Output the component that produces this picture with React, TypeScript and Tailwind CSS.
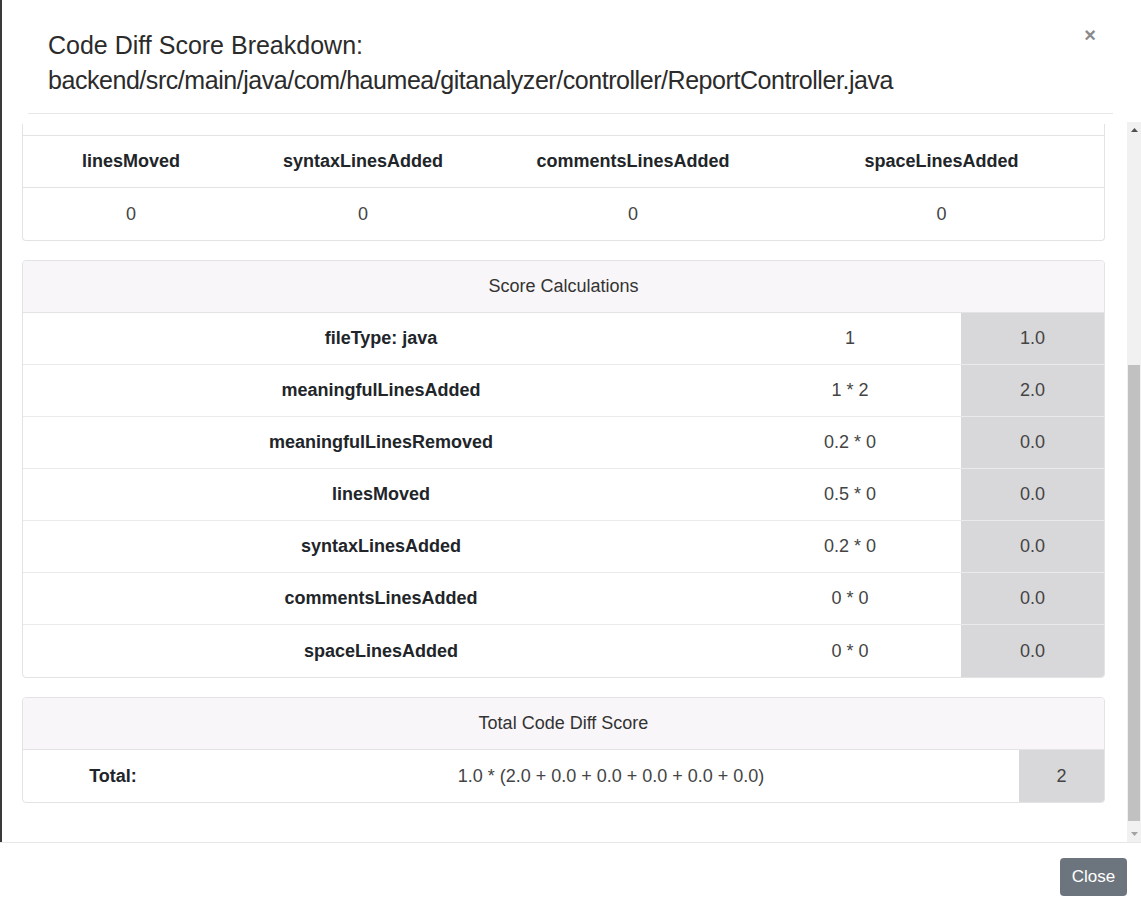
import React from "react";

const font = { fontFamily: '"Liberation Sans", Arial, sans-serif' };

const topCols = ["linesMoved", "syntaxLinesAdded", "commentsLinesAdded", "spaceLinesAdded"];

const calcRows = [
  { label: "fileType: java", expr: "1", value: "1.0" },
  { label: "meaningfulLinesAdded", expr: "1 * 2", value: "2.0" },
  { label: "meaningfulLinesRemoved", expr: "0.2 * 0", value: "0.0" },
  { label: "linesMoved", expr: "0.5 * 0", value: "0.0" },
  { label: "syntaxLinesAdded", expr: "0.2 * 0", value: "0.0" },
  { label: "commentsLinesAdded", expr: "0 * 0", value: "0.0" },
  { label: "spaceLinesAdded", expr: "0 * 0", value: "0.0" },
];

const Scrollbar = () => (
  <div className="flex h-full w-[14px] flex-col bg-[#f1f1f1]">
    <div className="flex h-[16px] items-center justify-center">
      <svg width="7" height="4" viewBox="0 0 7 4">
        <path d="M0 4 L3.5 0 L7 4 Z" fill="#505050" />
      </svg>
    </div>
    <div className="h-[227px]" />
    <div className="mx-[1px] h-[456px] bg-[#c1c1c1]" />
    <div className="flex-1" />
    <div className="flex h-[16px] items-center justify-center">
      <svg width="7" height="4" viewBox="0 0 7 4">
        <path d="M0 0 L3.5 4 L7 0 Z" fill="#a3a3a3" />
      </svg>
    </div>
  </div>
);

export default function App() {
  return (
    <div className="relative flex h-[908px] w-[1141px] flex-col bg-white text-[#212529]" style={font}>
      <div className="absolute left-0 top-0 h-[842px] w-[2px] bg-[#3a3a3a]" />

      {/* header */}
      <div className="mx-[28px] flex h-[114px] border-b border-[#e9e6ea] pl-[20px] pt-[28px]">
        <div className="flex-1 text-[25px] leading-[35px] text-[#2b2b2b]">
          <div>Code Diff Score Breakdown:</div>
          <div className="tracking-[-0.45px]">backend/src/main/java/com/haumea/gitanalyzer/controller/ReportController.java</div>
        </div>
        <button className="-mt-[5px] mr-[17px] h-[24px] text-[20px] font-bold leading-[24px] text-[#8a8a8a]">×</button>
      </div>

      {/* body */}
      <div className="flex h-[728px]">
        <div className="flex w-[1127px] flex-col pl-[22px] pr-[22px] pt-[10px]">
          <div className="w-[1083px] rounded-b border-x border-b border-[#e4e2e5]">
            <div className="h-[11px]" />
            <div className="grid grid-cols-[216px_248px_292px_325px] border-t border-[#e4e2e5] text-[18px]">
              {topCols.map((c) => (
                <div key={c} className="flex h-[52px] items-center justify-center border-b border-[#e4e2e5] font-bold">
                  {c}
                </div>
              ))}
              {topCols.map((c) => (
                <div key={c + "v"} className="flex h-[52px] items-center justify-center text-[#444]">
                  0
                </div>
              ))}
            </div>
          </div>

          <div className="mt-[19px] w-[1083px] overflow-hidden rounded border border-[#e4e2e5] text-[18px]">
            <div className="flex h-[52px] items-center justify-center border-b border-[#e4e2e5] bg-[#f8f6f8] text-[#333]">
              Score Calculations
            </div>
            {calcRows.map((r, i) => (
              <div
                key={r.label}
                className={`grid h-[52px] grid-cols-[716px_222px_143px] ${i < calcRows.length - 1 ? "border-b border-[#ebe9ec]" : ""}`}
              >
                <div className="flex items-center justify-center font-bold">{r.label}</div>
                <div className="flex items-center justify-center text-[#444]">{r.expr}</div>
                <div className="flex items-center justify-center bg-[#d8d7d9] text-[#444]">{r.value}</div>
              </div>
            ))}
          </div>

          <div className="mt-[19px] w-[1083px] overflow-hidden rounded border border-[#e4e2e5] text-[18px]">
            <div className="flex h-[52px] items-center justify-center border-b border-[#e4e2e5] bg-[#f9f6f9] text-[#333]">
              Total Code Diff Score
            </div>
            <div className="grid h-[52px] grid-cols-[180px_816px_85px]">
              <div className="flex items-center justify-center font-bold">Total:</div>
              <div className="flex items-center justify-center text-[#444]">
                1.0 * (2.0 + 0.0 + 0.0 + 0.0 + 0.0 + 0.0)
              </div>
              <div className="flex items-center justify-center bg-[#d8d7d9] text-[#444]">2</div>
            </div>
          </div>
        </div>
        <div className="pt-[8px]">
          <Scrollbar />
        </div>
      </div>

      {/* footer */}
      <div className="flex flex-1 items-start justify-end border-t border-[#e9e6ea] pr-[14px] pt-[15px]">
        <button className="h-[38px] w-[67px] rounded bg-[#6c757d] text-[17px] text-white">Close</button>
      </div>
    </div>
  );
}
